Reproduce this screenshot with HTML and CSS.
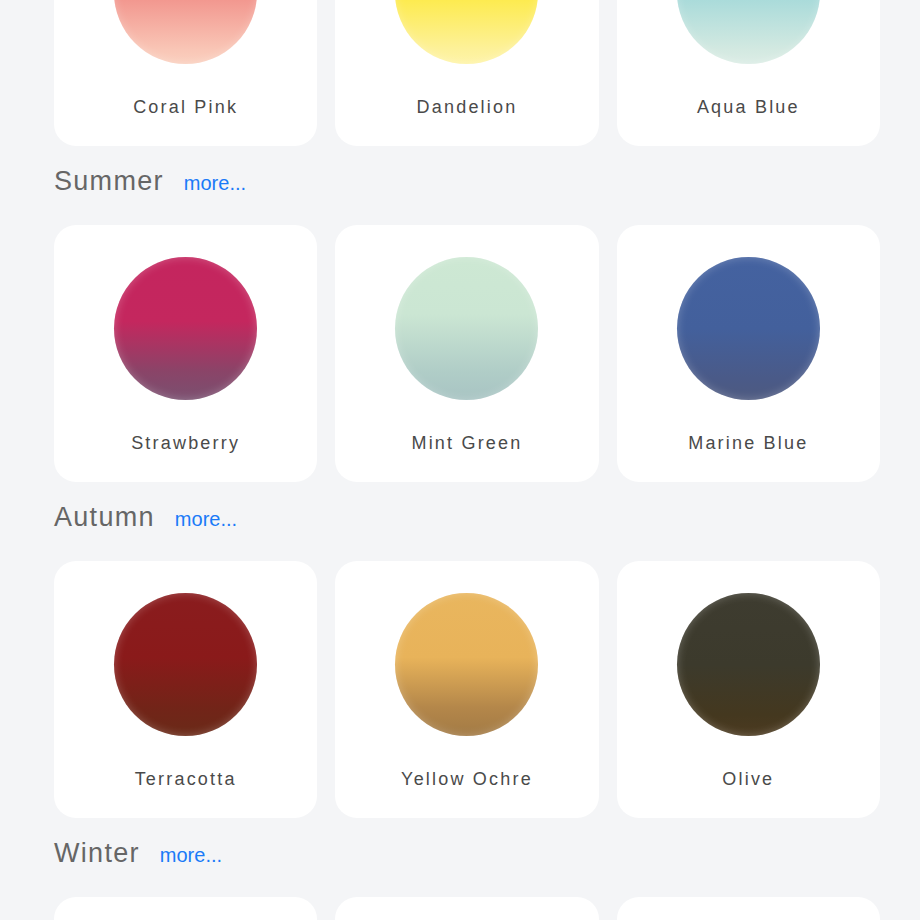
FILE: index.html
```html
<!DOCTYPE html>
<html lang="en">
<head>
  <meta charset="UTF-8">
  <meta name="viewport" content="width=device-width, initial-scale=1.0">
  <title>Seasonal Colors</title>
  <link rel="stylesheet" href="styles.css">
</head>
<body>
  <div class="page">

    <section class="season season-first">
      <div class="grid">
        <div class="card">
          <div class="swatch coral"></div>
          <p class="name">Coral Pink</p>
        </div>
        <div class="card">
          <div class="swatch dandelion"></div>
          <p class="name">Dandelion</p>
        </div>
        <div class="card">
          <div class="swatch aqua"></div>
          <p class="name">Aqua Blue</p>
        </div>
      </div>
    </section>

    <section class="season">
      <div class="season-head">
        <h2>Summer</h2>
        <a href="#" class="more">more...</a>
      </div>
      <div class="grid">
        <div class="card">
          <div class="swatch strawberry"></div>
          <p class="name">Strawberry</p>
        </div>
        <div class="card">
          <div class="swatch mint"></div>
          <p class="name">Mint Green</p>
        </div>
        <div class="card">
          <div class="swatch marine"></div>
          <p class="name">Marine Blue</p>
        </div>
      </div>
    </section>

    <section class="season">
      <div class="season-head">
        <h2>Autumn</h2>
        <a href="#" class="more">more...</a>
      </div>
      <div class="grid">
        <div class="card">
          <div class="swatch terracotta"></div>
          <p class="name">Terracotta</p>
        </div>
        <div class="card">
          <div class="swatch ochre"></div>
          <p class="name">Yellow Ochre</p>
        </div>
        <div class="card">
          <div class="swatch olive"></div>
          <p class="name">Olive</p>
        </div>
      </div>
    </section>

    <section class="season">
      <div class="season-head">
        <h2>Winter</h2>
        <a href="#" class="more">more...</a>
      </div>
      <div class="grid">
        <div class="card">
          <div class="swatch snow"></div>
        </div>
        <div class="card">
          <div class="swatch ice"></div>
        </div>
        <div class="card">
          <div class="swatch charcoal"></div>
        </div>
      </div>
    </section>

  </div>
</body>
</html>
```

FILE: styles.css
```css
* {
    margin: 0;
    padding: 0;
    box-sizing: border-box;
}

body {
    font-family: "Liberation Sans", Arial, sans-serif;
    background-color: #f4f5f7;
    overflow: hidden;
}

.page {
    padding: 0 40px 40px 54px;
}

/* page is shown scrolled down, first row cut off at the top */
.season-first {
    margin-top: -111px;
}

.season-head {
    display: flex;
    align-items: baseline;
    gap: 20px;
    height: 34px;
    margin: 18px 0 27px;
}

.season-head h2 {
    font-size: 27px;
    font-weight: normal;
    line-height: 35px;
    letter-spacing: 1.3px;
    color: #666;
}

.more {
    font-size: 20px;
    color: #1a7af8;
    text-decoration: none;
}

.grid {
    display: grid;
    grid-template-columns: repeat(3, 1fr);
    gap: 18px;
}

.card {
    background-color: #fff;
    border-radius: 22px;
    height: 257px;
    padding-top: 32px;
    display: flex;
    flex-direction: column;
    align-items: center;
}

.swatch {
    width: 143px;
    height: 143px;
    border-radius: 50%;
    box-shadow: inset 0 0 10px rgba(255, 255, 255, 0.25);
}

.name {
    margin-top: 31px;
    font-size: 18px;
    line-height: 24px;
    letter-spacing: 2.2px;
    color: #4a4a4a;
}

.coral { background: linear-gradient(to bottom, #ef7f7c 0%, #f08a84 45%, #f9c6b6 90%, #fad0bf 100%); }
.dandelion { background: linear-gradient(to bottom, #fde63a 0%, #fdea45 50%, #fdf19a 90%, #fef4a8 100%); }
.aqua { background: linear-gradient(to bottom, #95d3d5 0%, #9ed7d8 45%, #d3e9e1 90%, #dcede6 100%); }

.strawberry { background: linear-gradient(to bottom, #c4255e 0%, #c4275e 45%, #8a4468 80%, #7a5070 100%); }
.mint { background: linear-gradient(to bottom, #cde8d3 0%, #cbe6d3 40%, #b0cdc7 80%, #a8c4c3 100%); }
.marine { background: linear-gradient(to bottom, #4462a0 0%, #43609c 50%, #4a5a88 85%, #4e5a80 100%); }

.terracotta { background: linear-gradient(to bottom, #8a1c1e 0%, #8a1a1a 45%, #722418 80%, #6a2a18 100%); }
.ochre { background: linear-gradient(to bottom, #e9b65e 0%, #e8b35a 45%, #b4874a 80%, #a27a45 100%); }
.olive { background: linear-gradient(to bottom, #3e3c30 0%, #3c3a2c 50%, #44381f 85%, #4b3a20 100%); }

.snow { background: linear-gradient(to bottom, #f1f3f5 0%, #e3e7ec 100%); }
.ice { background: linear-gradient(to bottom, #b8d8ee 0%, #8fbde0 100%); }
.charcoal { background: linear-gradient(to bottom, #4a4a4f 0%, #333338 100%); }
```
